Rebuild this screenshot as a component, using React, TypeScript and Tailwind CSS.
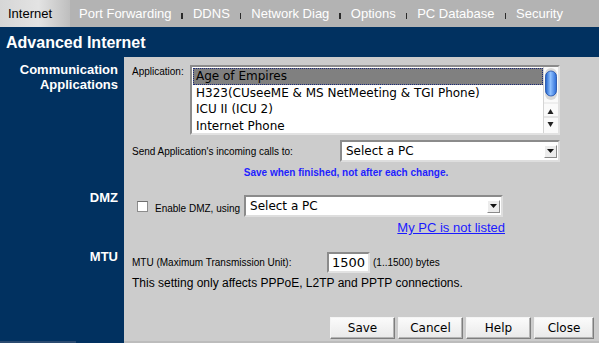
import React from 'react';

const tabs = ['Port Forwarding', 'DDNS', 'Network Diag', 'Options', 'PC Database', 'Security'];
const apps = ['Age of Empires', 'H323(CUseeME & MS NetMeeting & TGI Phone)', 'ICU II (ICU 2)', 'Internet Phone'];

const sans = "font-['Liberation_Sans',Arial,sans-serif]";
const ctrl = "font-['DejaVu_Sans',sans-serif]";

function ArrowBox() {
  return (
    <div className="w-[13px] h-[13px] flex items-center justify-center bg-[#ececec] border border-t-[#ffffff] border-l-[#ffffff] border-b-[#8a8a8a] border-r-[#8a8a8a]">
      <svg width="7" height="4" viewBox="0 0 7 4">
        <path d="M0 0 H7 L3.5 4 Z" fill="#111" />
      </svg>
    </div>
  );
}

function Select({ width }: { width: string }) {
  return (
    <div className={`${width} h-[22px] flex items-center justify-between bg-white border-2 border-t-[#8b8b8b] border-l-[#8b8b8b] border-b-[#dedede] border-r-[#dedede] pl-[4px] pr-[1px] ${ctrl} text-[12px] text-black`}>
      <span>Select a PC</span>
      <ArrowBox />
    </div>
  );
}

function ScrollBar() {
  return (
    <svg width="15" height="66" viewBox="0 0 15 66" className="shrink-0">
      <defs>
        <linearGradient id="thumb" x1="0" x2="1" y1="0" y2="0">
          <stop offset="0" stopColor="#1e5fc8" />
          <stop offset="0.45" stopColor="#8ec0ff" />
          <stop offset="1" stopColor="#2a6ad6" />
        </linearGradient>
      </defs>
      <rect x="0" y="0" width="15" height="66" fill="#fafafa" />
      <line x1="0.5" y1="0" x2="0.5" y2="66" stroke="#d4d4d4" />
      <rect x="2" y="1" width="12" height="32" rx="6" fill="#d9d9d9" />
      <rect x="2.5" y="4" width="11" height="25" rx="5.5" fill="url(#thumb)" stroke="#1f4fa8" strokeWidth="0.8" />
      <line x1="1" y1="36" x2="15" y2="36" stroke="#e2e2e2" />
      <path d="M4.5 47 L10.5 47 L7.5 42 Z" fill="#222" />
      <line x1="1" y1="50" x2="15" y2="50" stroke="#cfcfcf" />
      <path d="M4.5 55 L10.5 55 L7.5 60 Z" fill="#222" />
    </svg>
  );
}

function Button({ label, width }: { label: string; width: string }) {
  return (
    <button
      className={`${width} h-[22px] ${ctrl} text-[12px] text-black bg-gradient-to-b from-[#fbfbfb] to-[#e9e9e9] border border-t-[#f4f4f4] border-l-[#f4f4f4] border-b-[#7e7e7e] border-r-[#7e7e7e] shadow-[inset_-1px_-1px_0_#b4b4b4]`}
    >
      {label}
    </button>
  );
}

function SideLabel({ children }: { children: React.ReactNode }) {
  return (
    <div className={`bg-[#013160] text-white font-bold text-[13px] leading-[15px] text-right pr-[6px] pt-[5px] ${sans}`}>
      {children}
    </div>
  );
}

export default function App() {
  return (
    <div className={`w-[599px] h-[343px] overflow-hidden flex flex-col bg-[#cccccc] ${sans}`}>
      {/* tab bar */}
      <div className="h-[27px] flex items-center bg-[#b3b3b3] text-[13px]">
        <div className="h-full w-[70px] pl-[8px] flex items-center text-black bg-[linear-gradient(to_right,#d6d6d6,#e3e3e3_55%,#bebebe)]">
          Internet
        </div>
        <div className="flex items-center gap-[10px] pl-[9px]">
          {tabs.map((t, i) => (
            <React.Fragment key={t}>
              {i > 0 && <div className="w-[1.5px] h-[6px] mt-[4px] bg-[#2a2a2a]" />}
              <span className="text-white">{t}</span>
            </React.Fragment>
          ))}
        </div>
      </div>

      {/* header */}
      <div className="h-[30px] flex items-center pl-[6px] pt-[1px] bg-[#013160] text-white font-bold text-[16px]">
        Advanced Internet
      </div>

      <div className="flex-1 grid grid-cols-[124px_1fr] grid-rows-[128px_59px_68px_1fr]">
        {/* Communication Applications */}
        <SideLabel>
          Communication
          <br />
          Applications
        </SideLabel>
        <div className="pl-[8px] pt-[8px] w-[436px] flex flex-col">
          <div className="flex items-start">
            <span className="w-[58px] text-[10px] leading-[12px] text-black mt-[1px]">Application:</span>
            <div className="w-[370px] h-[70px] flex bg-white border-2 border-t-[#8b8b8b] border-l-[#8b8b8b] border-b-[#e2e2e2] border-r-[#e2e2e2]">
              <div className={`flex-1 flex flex-col pt-px pl-px ${ctrl} text-[12px] text-black`}>
                {apps.map((a, i) => (
                  <div
                    key={a}
                    className={`h-[16.5px] flex items-center pl-[3px] ${i === 0 ? 'bg-[#808080] outline outline-1 outline-dotted outline-[#1c2a78] -outline-offset-1' : ''}`}
                  >
                    {a}
                  </div>
                ))}
              </div>
              <ScrollBar />
            </div>
          </div>
          <div className="flex items-center justify-between mt-[5px]">
            <span className="text-[10px] text-black">Send Application's incoming calls to:</span>
            <Select width="w-[220px]" />
          </div>
          <div className="mt-[5px] text-center text-[10px] leading-[12px] font-bold text-[#1f1fff]">
            Save when finished, not after each change.
          </div>
        </div>

        {/* DMZ */}
        <SideLabel>DMZ</SideLabel>
        <div className="pl-[8px] pt-[10px] w-[381px] flex flex-col">
          <div className="flex items-center">
            <div className="ml-[5px] w-[11px] h-[11px] bg-white border border-[#8c8c8c] border-t-[#6f6f6f]" />
            <span className="ml-[7px] text-[10px] text-black mt-[4px]">Enable DMZ, using</span>
            <div className="ml-[4px]">
              <Select width="w-[259px]" />
            </div>
          </div>
          <div className="mt-[3px] text-right text-[13px] leading-[15px] text-[#1a1aff] underline">
            My PC is not listed
          </div>
        </div>

        {/* MTU */}
        <SideLabel>MTU</SideLabel>
        <div className="pl-[8px] pt-[8px] flex flex-col">
          <div className="flex items-center">
            <span className="w-[195px] text-[10px] text-black">MTU (Maximum Transmission Unit):</span>
            <div className={`w-[43px] h-[21px] flex items-center pl-[3px] bg-white border-2 border-t-[#8b8b8b] border-l-[#8b8b8b] border-b-[#e2e2e2] border-r-[#e2e2e2] ${ctrl} text-[13px] text-black`}>
              1500
            </div>
            <span className="ml-[3px] text-[10px] text-black">(1..1500) bytes</span>
          </div>
          <div className="mt-[3px] text-[12px] leading-[14px] text-black">
            This setting only affects PPPoE, L2TP and PPTP connections.
          </div>
        </div>

        {/* buttons */}
        <div className="bg-[#013160] flex flex-col justify-end">
          <div className="h-[2px] w-[76px] bg-[#2a4a70]" />
        </div>
        <div className="flex justify-end items-start pt-[5px] pr-[5px] gap-[3px] border-b-2 border-[#bcbcbc]">
          <Button label="Save" width="w-[65px]" />
          <Button label="Cancel" width="w-[65px]" />
          <Button label="Help" width="w-[65px]" />
          <Button label="Close" width="w-[60px]" />
        </div>
      </div>
    </div>
  );
}
